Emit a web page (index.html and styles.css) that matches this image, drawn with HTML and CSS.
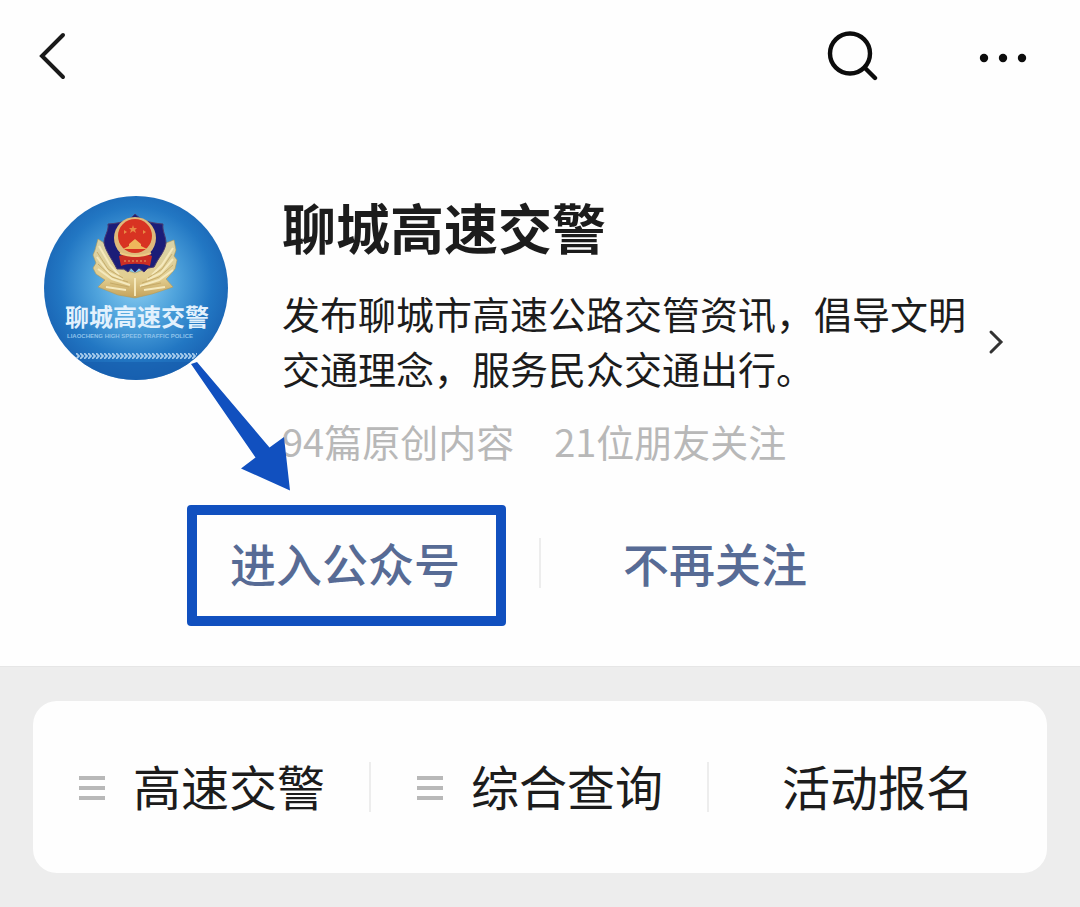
FILE: index.html
```html
<!DOCTYPE html>
<html lang="zh-CN">
<head>
<meta charset="utf-8">
<meta name="viewport" content="width=device-width, initial-scale=1">
<title>聊城高速交警</title>
<link rel="stylesheet" href="styles.css">
</head>
<body>
<header class="topbar">
  <button class="icon-button" type="button" aria-label="返回">
    <svg width="30" height="50" viewBox="0 0 30 50" fill="none" stroke="#1a1a1a" stroke-width="4" stroke-linecap="round"><path d="M25 4 4 25 25 46"/></svg>
  </button>
  <div class="topbar-tools">
    <button class="icon-button" type="button" aria-label="搜索">
      <svg width="52" height="52" viewBox="0 0 52 52" fill="none" stroke="#0c0c0c" stroke-width="4.400" stroke-linecap="round"><circle cx="24" cy="23.500" r="20"/><path d="M39 38 49 48"/></svg>
    </button>
    <button class="icon-button" type="button" aria-label="更多">
      <svg width="48" height="52" viewBox="0 0 48 52" fill="#0c0c0c"><circle cx="5" cy="28" r="4.2"/><circle cx="24" cy="28" r="4.2"/><circle cx="43" cy="28" r="4.2"/></svg>
    </button>
  </div>
</header>

<main>
  <section class="profile">
    <div class="avatar">
      <svg class="avatar-image" viewBox="0 0 184 184" role="img" aria-label="聊城高速交警">
        <defs>
          <radialGradient id="sky" cx="0.5" cy="0.47" r="0.55">
            <stop offset="0" stop-color="#8fd0f2"/>
            <stop offset="0.4" stop-color="#4fa3dc"/>
            <stop offset="0.75" stop-color="#2277c3"/>
            <stop offset="1" stop-color="#1962b2"/>
          </radialGradient>
          <linearGradient id="gold" x1="0" y1="0" x2="0" y2="1">
            <stop offset="0" stop-color="#d8d2a8"/>
            <stop offset="0.65" stop-color="#e3cf92"/>
            <stop offset="1" stop-color="#c4a25a"/>
          </linearGradient>
          <pattern id="hatch" y="157" width="4" height="6" patternUnits="userSpaceOnUse">
            <path d="M0 0 3 3 0 6" fill="none" stroke="#a9cdec" stroke-width="1.8"/>
          </pattern>
          <clipPath id="disc"><circle cx="92" cy="92" r="92"/></clipPath>
        </defs>
        <g clip-path="url(#disc)">
          <rect width="184" height="184" fill="url(#sky)"/>
          <rect y="166" width="184" height="18" fill="#165cab" opacity="0.6"/>
          <path fill="url(#gold)" stroke="#b39a58" stroke-width="0.6" d="M54 43 60 47 73 72 91 77 111 70 122 47 130 44 132 54 130 60 133 64 131 73 125 80 122 83 129 91 108 98 91 102 74 99 54 91 61 84 52 78 49 72 52 67 49 59 51 54Z"/>
          <path fill="none" stroke="#f5e9bd" stroke-width="2" d="M55 50 66 69 75 79M53 61 65 77 79 84M54 73 68 83 86 89M129 52 118 69 108 79M129 63 117 77 103 84M129 74 115 84 96 90M91 82V100M62 91 82 94M121 91 100 94"/>
          <path fill="none" stroke="#c0a462" stroke-width="0.8" d="M53 56 64 73 79 82M54 68 68 81 84 86M128 58 118 73 104 82M129 69 115 81 98 87M66 87 85 91M117 87 97 91"/>
          <path fill="#1b1d78" stroke="#4a3b70" stroke-width="1" d="M91 18C86 24 79 27 64 28 65 35 60 40 60 47 62 56 68 63 73 73L80 73 84 76 87 72 91 76 95 72 100 76 104 72 110 71C114 62 121 56 122 47 122 40 118 35 119 28 105 27 97 24 91 18Z"/>
          <circle cx="91" cy="42" r="21" fill="#dfba7b"/>
          <circle cx="91" cy="40" r="17" fill="#d83322"/>
          <path fill="#e88a45" d="M89 29 90 32 93 32 91 34 92 37 89 35 86 37 87 34 85 32 88 32ZM80 34 83 36 80 38ZM99 34 102 36 99 38Z"/>
          <path fill="#efb75b" d="M85 48 91 43 97 48 97 50 103 53 79 53 85 50Z"/>
          <path fill="#ca2d24" d="M75 60C82 57 86 61 91 61 97 61 101 57 108 60L106 70C99 67 83 67 77 70Z"/>
          <path fill="none" stroke="#eec982" stroke-width="2" d="M76 57C85 61 98 61 107 57"/>
          <path fill="none" stroke="#e5a861" stroke-dasharray="2 2" d="M80 65H104"/>
          <text class="avatar-name" x="21" y="130">聊城高速交警</text>
          <text class="avatar-latin" x="23" y="142">LIAOCHENG HIGH SPEED TRAFFIC POLICE</text>
          <rect x="32" y="157" width="121" height="6" fill="url(#hatch)"/>
        </g>
      </svg>
      <svg class="pointer" width="100" height="134" viewBox="0 0 100 134" aria-hidden="true">
        <path fill="#1150bf" d="M1 3 7 1 79.500 86.500 94 76 100 129.500 51 107.500 65.500 96.500Z"/>
      </svg>
    </div>
    <div class="details">
      <h1 class="name">聊城高速交警</h1>
      <a class="summary" href="#about">
        <span class="description">发布聊城市高速公路交管资讯，倡导文明交通理念，服务民众交通出行。</span>
        <svg class="chevron" width="16" height="30" viewBox="0 0 16 30" fill="none" stroke="#333" stroke-width="3" stroke-linecap="round"><path d="M3 7 13 17 3 27"/></svg>
      </a>
      <p class="stats"><span>94篇原创内容</span><span>21位朋友关注</span></p>
    </div>
  </section>

  <section class="actions">
    <button class="action action-enter" type="button">进入公众号</button>
    <button class="action action-unfollow" type="button">不再关注</button>
  </section>

  <div class="menu-area">
    <nav class="menu">
      <button class="menu-item" type="button"><span class="bars"></span>高速交警</button>
      <button class="menu-item" type="button"><span class="bars"></span>综合查询</button>
      <button class="menu-item" type="button">活动报名</button>
    </nav>
  </div>
</main>
</body>
</html>
```
FILE: styles.css
```css
* {
  box-sizing: border-box;
}

body {
  margin: 0;
  min-height: 100vh;
  display: flex;
  flex-direction: column;
  background: #fefefe;
  color: #1c1c1c;
  font-family: "Noto Sans CJK SC", sans-serif;
}

button {
  margin: 0;
  padding: 0;
  border: 0;
  background: none;
  color: inherit;
  font: inherit;
}

main {
  flex: 1;
  display: flex;
  flex-direction: column;
}

.topbar {
  display: flex;
  justify-content: space-between;
  align-items: center;
  padding: 30px 53px 30px 38px;
}

.topbar-tools {
  display: flex;
  gap: 101px;
}

.icon-button,
.icon-button svg {
  display: block;
}

.profile {
  display: flex;
  gap: 54px;
  padding: 84px 76px 0 44px;
}

.avatar {
  position: relative;
  flex: none;
  width: 184px;
  height: 184px;
}

.avatar-image {
  display: block;
  width: 100%;
  height: 100%;
}

.avatar-name {
  fill: #e2f1fd;
  font-size: 24px;
  font-weight: 700;
}

.avatar-latin {
  fill: #8fc3ea;
  font-family: "Liberation Sans", sans-serif;
  font-size: 6px;
  font-weight: 700;
}

.pointer {
  position: absolute;
  z-index: 1;
  left: 146px;
  top: 165px;
  overflow: visible;
}

.details {
  flex: 1;
  min-width: 0;
}

.name {
  margin: 0 0 27px;
  font-size: 54px;
  font-weight: 700;
  line-height: 62px;
}

.summary {
  display: flex;
  align-items: center;
  gap: 20px;
  color: inherit;
  text-decoration: none;
}

.description {
  flex: 1;
  font-size: 38px;
  line-height: 55px;
}

.chevron {
  flex: none;
}

.stats {
  display: flex;
  gap: 40px;
  margin: 18px 0 0;
  color: #b8b8b8;
  font-size: 38px;
  line-height: 55px;
}

.actions {
  display: grid;
  grid-template-columns: 1fr 1fr;
  align-items: center;
  padding: 37px 0 40px;
  background: linear-gradient(#ededed, #ededed) center 70px / 2px 50px no-repeat;
}

.action {
  padding: 13px 36px 19px 33px;
  border: 10px solid transparent;
  color: #576b95;
  font-size: 46px;
  font-weight: 500;
  line-height: 69px;
}

.action-enter {
  justify-self: end;
  margin-right: 34px;
  border-color: #1150bf;
  border-radius: 4px;
}

.action-unfollow {
  justify-self: start;
  margin-left: 40px;
}

.menu-area {
  flex: 1;
  padding: 34px 33px;
  border-top: 1px solid #e6e6e6;
  background: #ededed;
}

.menu {
  display: grid;
  grid-template-columns: repeat(3, 1fr);
  padding: 48px 0 52px;
  border-radius: 24px;
  background: #fefefe;
}

.menu-item {
  display: flex;
  justify-content: center;
  align-items: center;
  gap: 28px;
  font-size: 48px;
  line-height: 72px;
  background: linear-gradient(#ededed, #ededed) right 13px / 2px 50px no-repeat;
}

.menu-item:last-child {
  background: none;
}

.bars {
  width: 26px;
  height: 24px;
  margin-top: 5px;
  background: repeating-linear-gradient(#b8b8b8 0 4px, transparent 4px 10px);
}
```
